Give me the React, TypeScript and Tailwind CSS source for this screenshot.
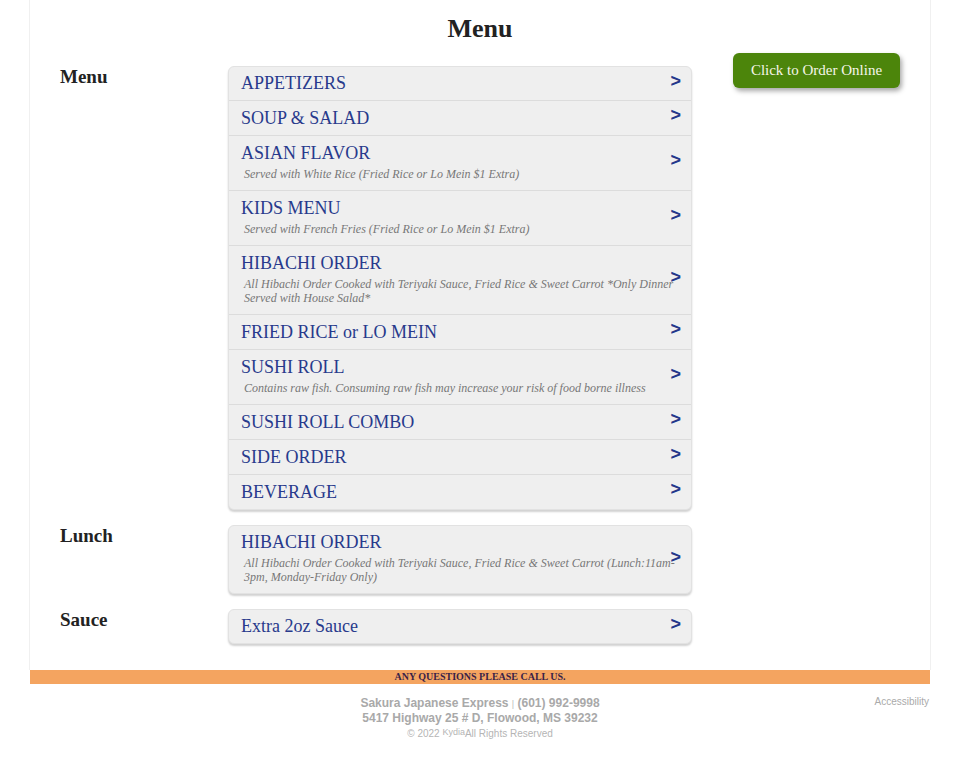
import React from "react";

type Item = { title: string; desc?: string };

const menuItems: Item[] = [
  { title: "APPETIZERS" },
  { title: "SOUP & SALAD" },
  { title: "ASIAN FLAVOR", desc: "Served with White Rice (Fried Rice or Lo Mein $1 Extra)" },
  { title: "KIDS MENU", desc: "Served with French Fries (Fried Rice or Lo Mein $1 Extra)" },
  {
    title: "HIBACHI ORDER",
    desc: "All Hibachi Order Cooked with Teriyaki Sauce, Fried Rice & Sweet Carrot *Only Dinner Served with House Salad*",
  },
  { title: "FRIED RICE or LO MEIN" },
  { title: "SUSHI ROLL", desc: "Contains raw fish. Consuming raw fish may increase your risk of food borne illness" },
  { title: "SUSHI ROLL COMBO" },
  { title: "SIDE ORDER" },
  { title: "BEVERAGE" },
];

const lunchItems: Item[] = [
  {
    title: "HIBACHI ORDER",
    desc: "All Hibachi Order Cooked with Teriyaki Sauce, Fried Rice & Sweet Carrot (Lunch:11am-3pm, Monday-Friday Only)",
  },
];

const sauceItems: Item[] = [{ title: "Extra 2oz Sauce" }];

function Row({ item, first, last }: { item: Item; first: boolean; last: boolean }) {
  return (
    <a
      href="#"
      className={`relative block pl-[12px] pr-[12px] ${first ? "pt-[5px]" : "pt-[6px]"} ${
        item.desc ? "pb-[9px]" : "pb-[6px]"
      } ${last ? "" : "border-b border-[#dcdcdc]"}`}
    >
      <div className="text-[18px] leading-[22px] text-[#283a8c]">{item.title}</div>
      {item.desc && (
        <div className="mt-[3px] pl-[3px] text-[12px] leading-[14px] italic text-[#777]">{item.desc}</div>
      )}
      <span
        className="absolute right-[10px] top-1/2 -translate-y-[calc(50%+3px)] text-[18px] leading-[20px] font-bold text-[#23368a]"
        style={{ fontFamily: '"Liberation Sans", Arial, sans-serif' }}
      >
        &gt;
      </span>
    </a>
  );
}

function Section({ label, items, children }: { label: string; items: Item[]; children?: React.ReactNode }) {
  return (
    <div className="flex items-start pl-[30px]">
      <div className="w-[168px] shrink-0 text-[19px] leading-[22px] font-bold text-[#222]">{label}</div>
      <div className="w-[464px] shrink-0 overflow-hidden rounded-[6px] border border-[#e2e2e2] bg-[#efefef] shadow-[0_2px_2px_rgba(0,0,0,0.18)]">
        {items.map((it, i) => (
          <Row key={i} item={it} first={i === 0} last={i === items.length - 1} />
        ))}
      </div>
      {children}
    </div>
  );
}

export default function App() {
  return (
    <div className="min-h-[761px] bg-white" style={{ fontFamily: '"Liberation Serif", "Times New Roman", serif' }}>
      <div className="mx-[29px] border-x border-[#f0f0f0] pb-[26px]">
        <h1 className="pt-[14px] text-center text-[26px] leading-[30px] font-bold text-[#222]">Menu</h1>
        <div className="mt-[22px] flex flex-col gap-[15px]">
          <Section label="Menu" items={menuItems}>
            <div className="ml-[41px] -mt-[13px]">
              <a
                href="#"
                className="block h-[35px] w-[167px] rounded-[6px] bg-[#4c850b] text-center text-[15px] leading-[35px] text-[#f6f6ea] shadow-[2px_3px_5px_rgba(0,0,0,0.35)]"
              >
                Click to Order Online
              </a>
            </div>
          </Section>
          <Section label="Lunch" items={lunchItems} />
          <Section label="Sauce" items={sauceItems} />
        </div>
      </div>
      <div className="mx-[30px] h-[14px] bg-[#f4a460] text-center text-[10px] leading-[14px] font-bold text-[#3a1f48]">
        ANY QUESTIONS PLEASE CALL US.
      </div>
      <div
        className="mx-[30px] mt-[12px] grid grid-cols-[1fr_auto_1fr] text-[#a9a9a9]"
        style={{ fontFamily: '"Liberation Sans", Arial, sans-serif' }}
      >
        <div />
        <div className="text-center">
          <div className="text-[12px] leading-[14px] font-bold">
            Sakura Japanese Express <span className="text-[9px] font-normal text-[#bbb]">|</span> (601) 992-9998
          </div>
          <div className="text-[12px] leading-[14px] font-bold">5417 Highway 25 # D, Flowood, MS 39232</div>
          <div className="mt-[2px] text-[10px] leading-[14px] text-[#b5b5b5]">
            © 2022 <span className="relative -top-[2px] text-[9px]">Kydia</span>All Rights Reserved
          </div>
        </div>
        <div className="pr-[1px] text-right text-[10px] leading-[12px] text-[#aaa]">Accessibility</div>
      </div>
    </div>
  );
}
